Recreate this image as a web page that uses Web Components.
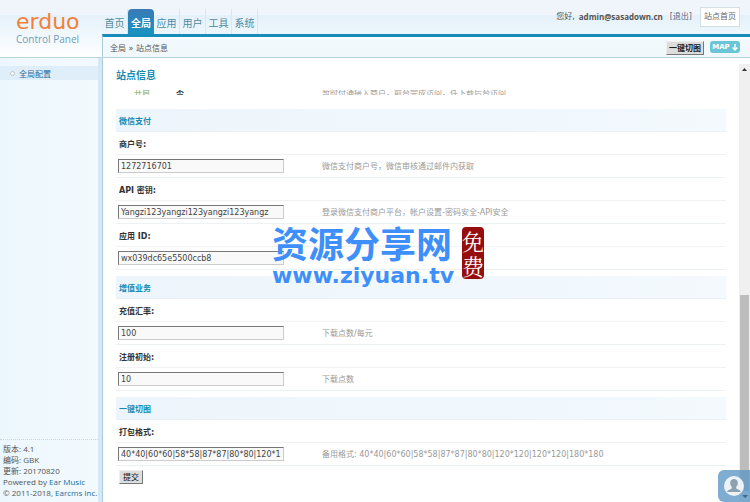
<!DOCTYPE html>
<html lang="zh-CN">
<head>
<meta charset="utf-8">
<title>Control Panel</title>
<style>
html,body{margin:0;padding:0}
body{font:8px/12px "DejaVu Sans","Noto Sans CJK SC",sans-serif;color:#444;background:#fff;--teal:#168bb0;--line:#b7d5df;--side:102px}
</style>
</head>
<body>
<control-panel></control-panel>
<script>
const define=(name,html,setup)=>customElements.define(name,class extends HTMLElement{
  connectedCallback(){
    if(this.shadowRoot)return;
    const t=document.createElement('template');
    t.innerHTML=html;
    this.attachShadow({mode:'open'}).append(t.content.cloneNode(true));
    if(setup)setup(this,this.shadowRoot);
  }
});

define('brand-logo',`<style>
:host{display:block;box-sizing:border-box;width:var(--side);height:57px;padding:9px 0 0 16px;background:linear-gradient(#eff5fb 0 15px,#e5f1fa 15px,#fbfdff 52px,#fff)}
b{display:block;font:22px/26px "DejaVu Sans",sans-serif;color:#f1803a}
span{display:block;font:10px/8px "Open Sans",sans-serif;color:#6f9eb8}
</style><b>erduo</b><span>Control Panel</span>`);

define('main-nav',`<style>
:host{display:block}
nav{display:flex;align-items:flex-end}
a{display:block;box-sizing:border-box;width:26px;height:25px;font-size:10px;line-height:29px;text-align:center;color:#4f8ba0;text-decoration:none;white-space:nowrap;border-right:1px solid #d9e7ef}
a.on{color:#fff;font-weight:bold;background:linear-gradient(#3a7ab5,#1a93c0);border:0;border-radius:4px 4px 0 0}
</style><nav><a href="#">首页</a><a href="#" class="on">全局</a><a href="#">应用</a><a href="#">用户</a><a href="#">工具</a><a href="#">系统</a></nav>`);

define('user-bar',`<style>
:host{display:flex;align-items:center;white-space:nowrap;color:#555}
a{color:#667;text-decoration:none}
b{font:bold 8px/12px "Open Sans",sans-serif;margin:0 7px 0 4px}
.home{margin-left:8px;padding:3px;background:#fff;border:1px solid #d3dfe4;line-height:12px;color:#666}
</style><span>您好,</span><b>admin@sasadown.cn</b><a href="#">[退出]</a><a class="home" href="#">站点首页</a>`);

define('app-header',`<style>
:host{display:flex;border-bottom:1px solid var(--line)}
.r{flex:1;min-width:0}
.top{display:flex;justify-content:space-between;align-items:flex-end;height:34px;padding-right:10px;background:linear-gradient(#eff5fb 0 15px,#e5f1fa 15px,#edf6fc)}
user-bar{align-self:center}
.crumb{display:flex;align-items:center;border-top:3px solid #168dbb;border-left:1px solid #a9cbdc;height:20px;padding:0 10px 0 7px;gap:6px;background:linear-gradient(#fff,#f2f9fc 3px,#f1f8fc)}
.crumb span{flex:1;padding-top:3px;color:#555}
button{font:bold 8px/11px "DejaVu Sans","Noto Sans CJK SC",sans-serif;color:#222;background:#ddd;border:1px solid #eee;border-right-color:#777;border-bottom-color:#777;padding:1px 2px 0;height:14px;margin-top:1px}
.map{display:flex;align-items:center;justify-content:center;gap:2px;width:30px;height:12px;border-radius:3px;background:#6ac6d6;color:#fff;font:bold 7px/12px "DejaVu Sans",sans-serif;text-decoration:none}
</style><brand-logo></brand-logo><div class="r"><div class="top"><main-nav></main-nav><user-bar></user-bar></div>
<div class="crumb"><span>全局 » 站点信息</span><button type="button">一键切图</button><a class="map" href="#">MAP<svg width="6" height="7" viewBox="0 0 6 7"><path d="M3 0v6M.7 3.5L3 6l2.3-2.5" fill="none" stroke="#fff" stroke-width="1.4"/></svg></a></div></div>`);

define('side-bar',`<style>
:host{display:flex;flex-direction:column;box-sizing:border-box;width:var(--side);padding-top:8px;border-right:4px solid #d6e8f6;background:linear-gradient(90deg,#ecf7fd,#f3fafe)}
.item{display:flex;align-items:center;gap:4px;height:14px;padding-left:10px;background:#dfeef8;color:#266a9a;text-decoration:none}
.item span{padding-top:3px}
i{width:3px;height:3px;border:1px solid #b4c4ce;border-radius:50%;background:#fff}
footer{margin-top:auto;border-top:1px dotted #c5d8e1;padding:3px 0 4px 3px;font:8px/11px "Open Sans","Noto Sans CJK SC",sans-serif;white-space:nowrap;color:#555}
footer div{height:11px}
footer a{color:#266a9a;text-decoration:none}
</style><a class="item" href="#"><i></i><span>全局配置</span></a>
<footer><div>版本: 4.1</div><div>编码: GBK</div><div>更新: 20170820</div><div>Powered by <a href="#">Ear Music</a></div><div>© 2011-2018, <a href="#">Earcms Inc.</a></div></footer>`);

define('form-section',`<style>
:host{display:block;margin-bottom:6px}
h2{margin:0;padding:3px 0 0 3px;font-size:8px;line-height:19px;color:var(--teal);background:linear-gradient(90deg,#edf5fc,#f3f9fd);border-bottom:1px solid #e9f1f5}
</style><h2></h2><slot></slot>`,(h,r)=>{r.querySelector('h2').textContent=h.getAttribute('heading')});

define('form-field',`<style>
:host{display:block}
label{display:block;font-weight:bold;line-height:19px;padding:3px 0 0 3px;color:#333;border-bottom:1px solid #f0f3f4}
.row{display:grid;grid-template-columns:166px 1fr;column-gap:38px;align-items:center;box-sizing:border-box;height:23px;padding-left:2px;border-bottom:1px solid #ecf2f4}
input{box-sizing:border-box;width:100%;height:14px;margin:0;padding:0 2px;font:8px/12px "DejaVu Sans",sans-serif;color:#444;background:#f9f9f9;border:1px solid #ccc;border-top-color:#777;border-left-color:#777;border-radius:0}
.hint{color:#999;padding-top:1px}
</style><label for="f"></label><div class="row"><input id="f" type="text"><span class="hint"><slot></slot></span></div>`,(h,r)=>{
  r.querySelector('label').textContent=h.getAttribute('label');
  r.querySelector('input').value=h.getAttribute('value');
});

define('settings-page',`<style>
:host{display:block;flex:1;min-width:0;padding:10px 13px 16px;border-left:1px solid #a9cbdc}
h1{margin:0;font-size:10px;line-height:16px;color:var(--teal)}
.cut{display:grid;grid-template-columns:166px 1fr;column-gap:38px;align-items:end;height:5px;overflow:hidden;margin:6px 0 14px;padding-left:2px;color:#999}
.cut div{height:8px;line-height:8px}
.cut em{font-style:normal;color:#6aa86a;margin:0 26px 0 16px}
.cut b{color:#444}
button{margin:-3px 0 0 3px;padding:1px 3px 0;height:14px;font:8px/11px "DejaVu Sans","Noto Sans CJK SC",sans-serif;color:#111;background:#ddd;border:1px solid #eee;border-right-color:#777;border-bottom-color:#777;border-radius:0}
</style><h1>站点信息</h1>
<div class="cut"><div><em>开启</em><b>否</b></div><div>暂时付通接入商户，前台完成访问，任下载后台访问</div></div>
<form-section heading="微信支付">
<form-field label="商户号:" value="1272716701">微信支付商户号，微信审核通过邮件内获取</form-field>
<form-field label="API 密钥:" value="Yangzi123yangzi123yangzi123yangz">登录微信支付商户平台，帐户设置-密码安全-API安全</form-field>
<form-field label="应用 ID:" value="wx039dc65e5500ccb8"></form-field>
</form-section>
<form-section heading="增值业务">
<form-field label="充值汇率:" value="100">下载点数/每元</form-field>
<form-field label="注册初始:" value="10">下载点数</form-field>
</form-section>
<form-section heading="一键切图">
<form-field label="打包格式:" value="40*40|60*60|58*58|87*87|80*80|120*120|120*120|180*180">备用格式: 40*40|60*60|58*58|87*87|80*80|120*120|120*120|180*180</form-field>
</form-section>
<button type="submit">提交</button>`);

define('scroll-track',`<style>
:host{display:flex;flex-direction:column;width:11px;margin-top:6px;background:#f0f0f0}
svg{display:block;width:11px;height:11px}
.gap{flex:220}.thumb{flex:196;margin:0 1px;background:#bdbdbd}
</style><svg viewBox="0 0 11 11"><path d="M3 7l2.5-3L8 7z" fill="#333"/></svg><div class="gap"></div><div class="thumb"></div><svg viewBox="0 0 11 11"><path d="M3 4l2.5 3L8 4z" fill="#333"/></svg>`);

define('site-watermark',`<style>
:host{position:absolute;left:272px;top:219px;display:flex;gap:8px;align-items:center;pointer-events:none}
.n{font:bold 36px/46px "Noto Sans CJK SC",sans-serif;color:#3f8ffb}
.u{font:bold 22px/22px "DejaVu Sans",sans-serif;color:#3f8ffb}
.seal{display:grid;align-content:center;justify-items:center;width:22px;height:52px;border-radius:4px;background:#950d0d;color:#fff;font:22px/25px "Noto Serif CJK SC","Noto Sans CJK SC",sans-serif}
</style><div><div class="n">资源分享网</div><div class="u">www.ziyuan.tv</div></div><div class="seal"><span>免</span><span>费</span></div>`);

define('contact-badge',`<style>
:host{position:absolute;right:0;bottom:0;width:32px;height:32px}
button{display:block;width:100%;height:100%;padding:0;border:0;border-radius:6px 0 0 6px;background:rgba(91,149,196,.78)}
svg{display:block;width:32px;height:32px}
</style><button type="button" aria-label="contact"><svg viewBox="0 0 32 32"><circle cx="16" cy="16" r="10" fill="#edf2f6"/><path d="M9 22c1-2.500 4-2.500 4.800-3.800v-1.400c-1.300-1.200-1.600-2.700-1.600-4.100 0-5 7.600-5 7.600 0 0 1.400-.3 2.900-1.600 4.100v1.400c.8 1.300 3.800 1.300 4.800 3.800z" fill="#8ca1b2"/><path d="M25 25h5l-2.500 3z" fill="#41698b"/></svg></button>`);

define('control-panel',`<style>
:host{position:relative;display:flex;flex-direction:column;min-height:100vh}
main{display:flex;flex:1}
</style><app-header></app-header><main><side-bar></side-bar><settings-page></settings-page><scroll-track></scroll-track></main><site-watermark></site-watermark><contact-badge></contact-badge>`);
</script>
</body>
</html>
